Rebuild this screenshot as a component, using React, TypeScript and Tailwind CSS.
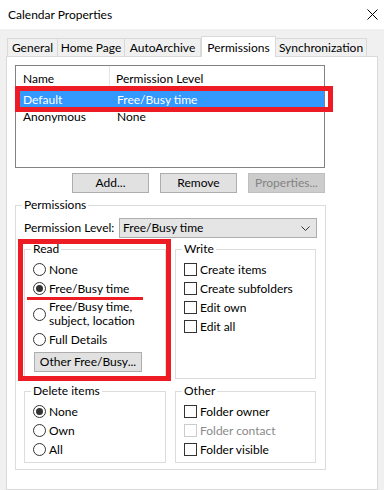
import { ReactNode } from "react";

const tabs = [
  { label: "General", width: "w-[51px]" },
  { label: "Home Page", width: "w-[67px]" },
  { label: "AutoArchive", width: "w-[76px]" },
  { label: "Permissions", width: "w-[75px]", active: true },
  { label: "Synchronization", width: "w-[91px]" },
];

function Radio({ checked, children }: { checked?: boolean; children: ReactNode }) {
  return (
    <div className="flex h-[19px] items-center gap-[3px]">
      <span className="flex h-[13px] w-[13px] shrink-0 items-center justify-center rounded-full border border-[#333333] bg-white">
        {checked && <span className="h-[7px] w-[7px] rounded-full bg-[#333333]" />}
      </span>
      <span>{children}</span>
    </div>
  );
}

function Check({ disabled, children }: { disabled?: boolean; children: ReactNode }) {
  return (
    <div className={"flex h-[19px] items-center gap-[3px] " + (disabled ? "text-[#8a8a8a]" : "")}>
      <span
        className={
          "h-[13px] w-[13px] shrink-0 border bg-white " +
          (disabled ? "border-[#cccccc]" : "border-[#333333]")
        }
      />
      <span>{children}</span>
    </div>
  );
}

function Group({
  title,
  className,
  children,
}: {
  title: string;
  className?: string;
  children: ReactNode;
}) {
  return (
    <fieldset className={"border border-[#dcdcdc] px-[8px] " + (className ?? "")}>
      <legend className="-ml-[2px] px-[2px] leading-[16px]">{title}</legend>
      {children}
    </fieldset>
  );
}

export default function App() {
  return (
    <div
      className="relative flex h-[490px] w-[384px] flex-col overflow-hidden bg-[#f0f0f0] text-[12px] text-black"
      style={{ fontFamily: "Lato, 'Noto Sans', sans-serif" }}
    >
      {/* title bar */}
      <div className="flex h-[29px] shrink-0 items-center justify-between bg-white pl-[8px] pr-[6px]">
        <span>Calendar Properties</span>
        <svg width="11" height="11" viewBox="0 0 11 11" className="mb-[1px]">
          <path d="M0.5 0.5 L10.5 10.5 M10.5 0.5 L0.5 10.5" stroke="#000" strokeWidth="1" />
        </svg>
      </div>

      {/* tabs */}
      <div className="relative z-10 mt-[7px] flex h-[20px] shrink-0 items-end pl-[7px]">
        {tabs.map((tab, i) =>
          tab.active ? (
            <div
              key={tab.label}
              className={`${tab.width} -mb-px flex h-[21px] items-start justify-center border-x border-t border-[#d9d9d9] bg-white pt-[2px]`}
            >
              {tab.label}
            </div>
          ) : (
            <div
              key={tab.label}
              className={`${tab.width} flex h-[18px] items-center justify-center border-t border-r border-[#d9d9d9] bg-[#f0f0f0] ${i === 0 ? "border-l" : ""}`}
            >
              {tab.label}
            </div>
          )
        )}
      </div>

      {/* panel */}
      <div className="ml-[6px] w-[372px] flex-1 border border-[#d9d9d9] bg-white pl-[8px] pt-[8px]">
        <div className="h-[103px] w-[310px] border border-[#828282] bg-white">
          <div className="flex h-[25px]">
            <div className="flex w-[94px] items-center border-r border-[#e5e5e5] pl-[7px]">Name</div>
            <div className="flex items-center pl-[6px]">Permission Level</div>
          </div>
          <div className="flex h-[17px] items-center bg-[#3399ff] text-white">
            <div className="w-[95px] pl-[7px]">Default</div>
            <div className="pl-[6px]">Free/Busy time</div>
          </div>
          <div className="flex h-[17px] items-center">
            <div className="w-[95px] pl-[7px]">Anonymous</div>
            <div className="pl-[6px]">None</div>
          </div>
        </div>

        <div className="mt-[5px] flex w-[310px] justify-end gap-[11px]">
          <button className="h-[20px] w-[77px] border border-[#adadad] bg-[#e1e1e1]">Add...</button>
          <button className="h-[20px] w-[77px] border border-[#adadad] bg-[#e1e1e1]">Remove</button>
          <button className="h-[20px] w-[77px] border border-[#bfbfbf] bg-[#cccccc] text-[#838383]">
            Properties...
          </button>
        </div>

        <Group title="Permissions" className="mt-[4px] w-[310px] pt-[5px] pb-[6px]">
          <div className="flex h-[20px] items-center">
            <span className="w-[95px]">Permission Level:</span>
            <div className="flex h-[20px] w-[198px] items-center justify-between border border-[#adadad] bg-[#e5e5e5] pl-[3px] pr-[6px]">
              <span>Free/Busy time</span>
              <svg width="9" height="5" viewBox="0 0 9 5">
                <path d="M0.5 0.5 L4.5 4.5 L8.5 0.5" fill="none" stroke="#333" strokeWidth="1" />
              </svg>
            </div>
          </div>

          <div className="mt-[3px] grid grid-cols-[142px_141px] gap-x-[9px]">
            <Group title="Read" className="pt-[3px] pb-[6px]">
              <Radio>None</Radio>
              <Radio checked>Free/Busy time</Radio>
              <div className="flex h-[32px] items-center gap-[3px]">
                <span className="h-[13px] w-[13px] shrink-0 rounded-full border border-[#333333] bg-white" />
                <span className="leading-[14px]">
                  Free/Busy time,
                  <br />
                  subject, location
                </span>
              </div>
              <Radio>Full Details</Radio>
              <button className="ml-px mt-[3px] h-[20px] w-[108px] border border-[#adadad] bg-[#e1e1e1]">
                Other Free/Busy...
              </button>
            </Group>
            <Group title="Write" className="pt-[3px]">
              <Check>Create items</Check>
              <Check>Create subfolders</Check>
              <Check>Edit own</Check>
              <Check>Edit all</Check>
            </Group>
          </div>

          <div className="mt-[4px] grid grid-cols-[142px_141px] gap-x-[9px]">
            <Group title="Delete items" className="pt-[3px] pb-[3px]">
              <Radio checked>None</Radio>
              <Radio>Own</Radio>
              <Radio>All</Radio>
            </Group>
            <Group title="Other" className="pt-[3px] pb-[3px]">
              <Check>Folder owner</Check>
              <Check disabled>Folder contact</Check>
              <Check>Folder visible</Check>
            </Group>
          </div>
        </Group>
      </div>

      {/* annotations */}
      <div className="pointer-events-none absolute left-[15px] top-[86px] h-[26px] w-[318px] border-[5px] border-[#ed1c24]" />
      <div className="pointer-events-none absolute left-[18px] top-[239px] h-[142px] w-[153px] border-[5px] border-[#ed1c24]" />
      <div className="pointer-events-none absolute left-[27px] top-[297px] h-[3px] w-[116px] bg-[#ed1c24]" />
    </div>
  );
}
